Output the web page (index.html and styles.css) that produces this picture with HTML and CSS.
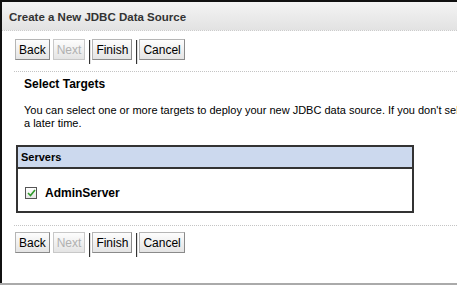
FILE: index.html
```html
<!DOCTYPE html>
<html lang="en">

<head>
  <meta charset="UTF-8">
  <meta name="viewport" content="width=device-width, initial-scale=1.0">
  <title>Create a New JDBC Data Source</title>
  <link rel="stylesheet" href="styles.css">
</head>

<body>
  <div class="panel">
    <div class="title">Create a New JDBC Data Source</div>

    <div class="toolbar">
      <button class="btn">Back</button>
      <button class="btn" disabled>Next</button>
      <span class="sep"></span>
      <button class="btn">Finish</button>
      <span class="sep"></span>
      <button class="btn">Cancel</button>
    </div>

    <div class="content">
      <h2 class="heading">Select Targets</h2>
      <p class="intro">You can select one or more targets to deploy your new JDBC data source. If you don't select targets, you can deploy it at a later time.</p>

      <table class="servers">
        <tr>
          <th>Servers</th>
        </tr>
        <tr>
          <td>
            <label class="server">
              <span class="check">
                <svg width="9" height="8" viewBox="0 0 9 8">
                  <path d="M1 4 L3.5 6.5 L8 1" fill="none" stroke="#2f9a2a" stroke-width="1.6" />
                </svg>
              </span>
              AdminServer
            </label>
          </td>
        </tr>
      </table>
    </div>

    <div class="toolbar bottom">
      <button class="btn">Back</button>
      <button class="btn" disabled>Next</button>
      <span class="sep"></span>
      <button class="btn">Finish</button>
      <span class="sep"></span>
      <button class="btn">Cancel</button>
    </div>
  </div>
</body>

</html>
```

FILE: styles.css
```css
html,
body {
  margin: 0;
  padding: 0;
  background-color: #fff;
}

body {
  width: 457px;
  height: 288px;
  overflow: hidden;
  font-family: "Liberation Sans", Arial, sans-serif;
  font-size: 11px;
  color: #000;
}

.panel {
  height: 281px;
  border-top: 2px solid #111;
  border-left: 2px solid #111;
  box-shadow: 0 2px 0 #aaa;
  overflow: hidden;
}

.title {
  height: 28px;
  padding-left: 7px;
  line-height: 30px;
  font-weight: bold;
  font-size: 11.5px;
  color: #333;
  background: linear-gradient(#f4f4f4, #e2e2e2);
  border-bottom: 1px dotted #ccc;
}

.toolbar {
  display: flex;
  align-items: flex-start;
  height: 32px;
  margin-left: 12px;
  padding: 8px 0 0 1px;
  border-bottom: 1px dotted #c4c4c4;
}

.toolbar.bottom {
  margin-top: 12px;
  padding-top: 6px;
  border-top: 1px dotted #c4c4c4;
  border-bottom: none;
}

.btn {
  height: 21px;
  margin-right: 3px;
  padding: 0 3px;
  font-family: "Liberation Sans", Arial, sans-serif;
  font-size: 12px;
  color: #000;
  background: linear-gradient(#fdfdfd, #e4e4e4);
  border: 1px solid #b5b5b5;
  border-right-color: #8a8a8a;
  border-bottom-color: #8a8a8a;
  border-radius: 0;
}

.btn:disabled {
  color: #b0b0b0;
  border-color: #c8c8c8;
}

.sep {
  width: 1px;
  height: 24px;
  margin: 1px 1px 0 1px;
  background-color: #333;
  border-right: 1px solid #e0e0e0;
}

.content {
  padding: 0 0 0 22px;
}

.heading {
  margin: 5px 0 0;
  line-height: 14px;
  font-size: 12px;
  font-weight: bold;
}

.intro {
  margin: 13px 0 0;
  line-height: 13px;
  width: 590px;
}

.servers {
  width: 398px;
  margin: 15px 0 0 -8px;
  border: 2px solid #333;
  border-collapse: collapse;
}

.servers th {
  height: 20px;
  padding: 0 0 0 3px;
  text-align: left;
  font-size: 11px;
  background-color: #ccd9ee;
  border-bottom: 2px solid #333;
}

.servers td {
  height: 36px;
  padding: 6px 0 0 7px;
}

.server {
  display: flex;
  align-items: center;
  gap: 8px;
  font-weight: bold;
  font-size: 12px;
}

.check {
  display: flex;
  align-items: center;
  justify-content: center;
  width: 10px;
  height: 10px;
  border: 1px solid #555;
  background: linear-gradient(#fff, #e6e6e6);
}
```
